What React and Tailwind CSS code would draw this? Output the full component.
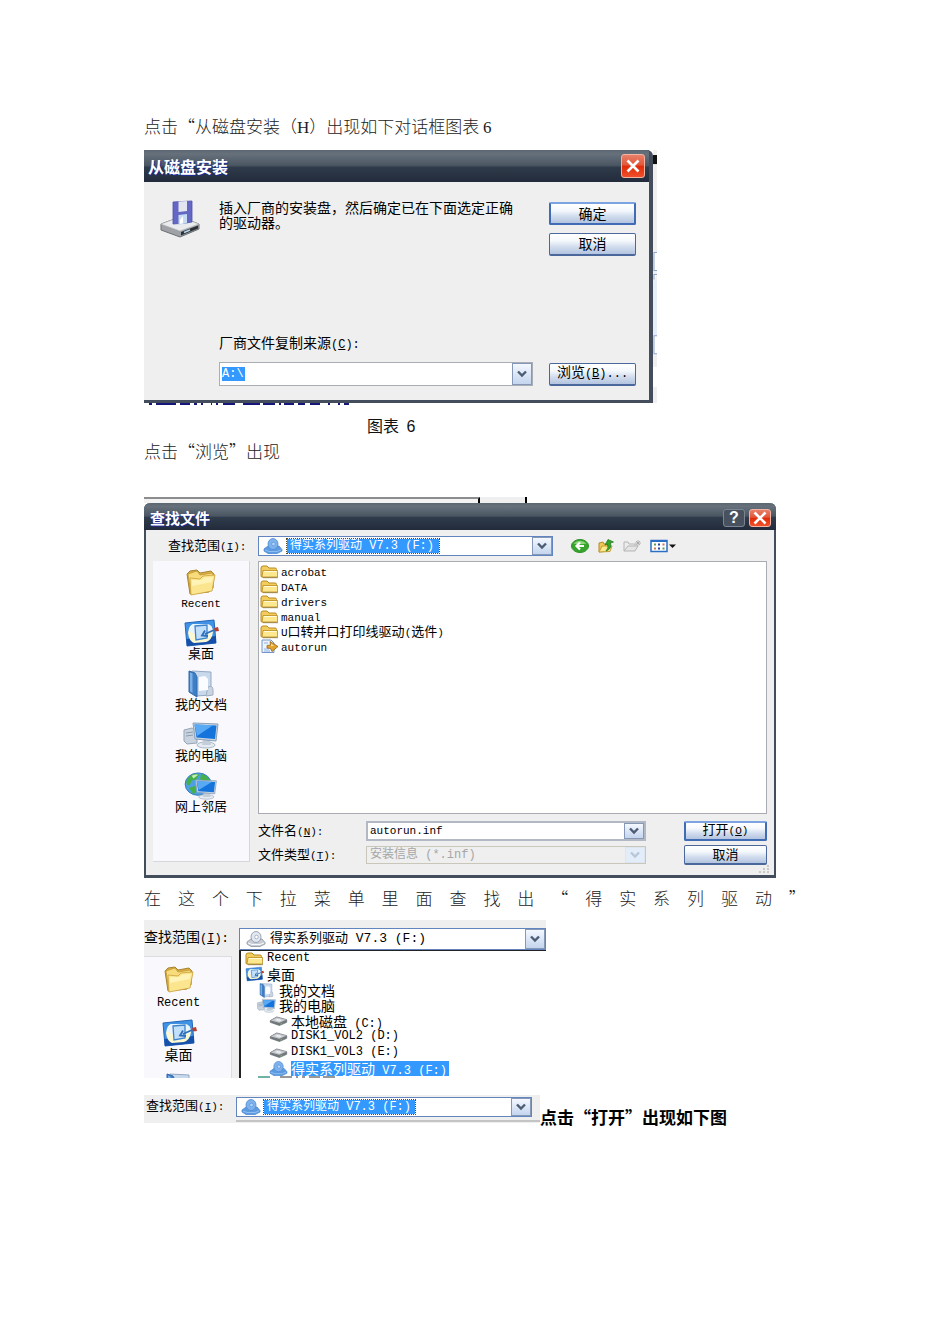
const CJK = "font-['Noto_Sans_CJK_SC',sans-serif]";
const MONO = "font-['Liberation_Mono','Noto_Sans_CJK_SC',monospace]";
const TITLE = 'bg-[linear-gradient(#5b6670_0%,#66717c_12%,#4a5662_48%,#2f3b4a_54%,#222b3b_100%)]';
const FACE = 'bg-[linear-gradient(#ffffff_0%,#f4f8fc_35%,#d3deee_62%,#b4c4e0_100%)]';

/* Latin runs are set smaller than the Chinese ones, as in a half-width bitmap face. */
function Mixed({ children, small = false }) {
  const size = small ? 'text-[11px]' : 'text-[12px]';
  return children.split(/([\x20-\x7e]+)/).filter(Boolean).map((part, i) =>
    /^[\x20-\x7e]/.test(part) ? (
      <span key={i} className={`${MONO} ${size} whitespace-pre`}>{part}</span>
    ) : (
      <span key={i}>{part}</span>
    ),
  );
}

function Key({ children, small = false }) {
  return (
    <span className={`${MONO} ${small ? 'text-[11px]' : 'text-[12px]'}`}>
      (<span className="underline">{children}</span>)
    </span>
  );
}

function Folder({ className }) {
  return (
    <svg viewBox="0 0 32 28" className={className} aria-hidden="true">
      <path d="M2 6 L5 3 L12 2 L15 5 L26 3 L29 6 L28 20 L24 24 L5 26 Z" fill="#d9ae43" stroke="#a98430" />
      <path d="M3 6 L12 3 L15 7 L28 5 L26 22 L6 26 Z" fill="#f8dc7c" stroke="#c39a3a" strokeWidth=".8" />
      <path d="M5 10 L15 11 L18 8 L30 7 L27 23 L6 27 Z" fill="#fbe68f" stroke="#cda23c" strokeWidth=".8" />
      <path d="M7 12 L16 12 L19 9.500 L28 9 L27 14 L7 18 Z" fill="#fff3b5" />
    </svg>
  );
}

function SmallFolder({ className }) {
  return (
    <svg viewBox="0 0 19 15" className={className} aria-hidden="true">
      <path d="M1 12.500 V4 Q1 2 3 2 H7 L9 4 H15 Q16.500 4 16.500 5.500 V13 H2 Z" fill="#f2cc5c" stroke="#b98b22" />
      <path d="M2 13 L3 6.500 H17.500 V13 Z" fill="#fde88f" stroke="#b98b22" strokeWidth=".8" />
      <path d="M4 7.500 H16.500" stroke="#fffbd8" />
      <path d="M3 13.700 H18" stroke="#8f7a3c" strokeWidth=".8" />
    </svg>
  );
}

function DesktopIcon({ className }) {
  return (
    <svg viewBox="0 0 36 28" className={className} aria-hidden="true">
      <path d="M2 4 L31 1 L33 24 L4 27 Z" fill="#3f92e6" stroke="#2366b8" />
      <path d="M3.500 20 L33 17 L33 24 L4 27 Z" fill="#1650a8" />
      <path d="M10 5 H24 Q30 6 30 13 Q29 21 23 23 L11 24 Q6 22 5 14 Q6 6 10 5 Z" fill="#fbf8d2" />
      <path d="M11 5 H24 Q30 6 29 12 L20 20 L6 12 Q7 6 11 5 Z" fill="#eaf4ff" />
      <path d="M12 7 L24 6 V19 L13 21 Z" fill="#c2e0fa" stroke="#3e84ca" strokeWidth="1.300" />
      <path d="M31 11 L22 15 M22 11.500 L19 16.500 L25 17" stroke="#2d6fbb" strokeWidth="1.800" fill="none" />
      <path d="M31 9 L35 8 L36 12 L32 12.500 Z" fill="#b8402f" />
    </svg>
  );
}

function DocsIcon({ className }) {
  return (
    <svg viewBox="0 0 26 28" className={className} aria-hidden="true">
      <path d="M4 1 L23 2 L23 25 L8 26 Z" fill="#c9d9ec" stroke="#93a8c2" />
      <path d="M20 17 Q25 15 25 20 V25 L18 26 Z" fill="#cbd5e1" stroke="#a0afc2" />
      <path d="M11 7 L17 6 L20 9 V20 L11 21 Z" fill="#fafcff" />
      <path d="M1 1 L7 3 L9 7 V27 L1 22 Z" fill="#3f7fc6" stroke="#2f69ac" />
      <path d="M2 2.500 L4.500 3.500 V23 L2 21 Z" fill="#7fb0e4" />
    </svg>
  );
}

function Monitor() {
  return (
    <>
      <ellipse cx="23" cy="24" rx="9" ry="3" fill="#e4ebf2" stroke="#aab7c5" />
      <path d="M20 19 H27 L28 24 H19 Z" fill="#c3ced9" />
      <path d="M10 2 L35 3 L33 20 L12 18 Z" fill="#c8d6e4" stroke="#8b9fb5" />
      <path d="M11.500 3.500 L33.500 4.500 L32 18 L13.500 16.500 Z" fill="#1573dc" />
      <path d="M11.500 3.500 L30 4.300 L14 15 Z" fill="#58aaf4" />
    </>
  );
}

function ComputerIcon({ className }) {
  return (
    <svg viewBox="0 0 36 28" className={className} aria-hidden="true">
      <path d="M1 9 L9 7 L14 10 V22 L4 23 L1 20 Z" fill="#c8d3df" stroke="#96a5b5" />
      <path d="M3 12 L10 11 M3 15 L10 14" stroke="#8c9bab" />
      <Monitor />
    </svg>
  );
}

function NetworkIcon({ className }) {
  return (
    <svg viewBox="0 0 36 30" className={className} aria-hidden="true">
      <ellipse cx="15" cy="13" rx="14" ry="12" fill="#4fa0e2" stroke="#2f78b8" />
      <path d="M5 6 Q10 0 16 3 L13 8 L8 9 L6 14 L3 14 Q1 10 5 6 Z M18 2 Q26 4 27 10 L21 11 L17 8 Z M5 17 L12 15 L13 21 L10 24 Z" fill="#45b04a" />
      <path d="M8 4 Q12 2 15 3 L10 7 Z" fill="#c6efb6" />
      <g transform="translate(3 7) scale(.9 .82)"><Monitor /></g>
    </svg>
  );
}

function DiscDrive({ className, tinted = false }) {
  const body = tinted ? '#5d9be0' : '#c9ced6';
  const edge = tinted ? '#4c8cd6' : '#8a929e';
  const disc = tinted ? '#7fb2ec' : '#dfe8f3';
  return (
    <svg viewBox="0 0 20 16" className={className} aria-hidden="true">
      <path d="M1 11 L5 8 H16 L19 11.500 V13 L14 15.500 H5 L1 13 Z" fill={body} stroke={edge} strokeWidth=".8" />
      <ellipse cx="10" cy="6" rx="5" ry="5.500" fill={disc} stroke={edge} strokeWidth=".8" />
      <ellipse cx="10.500" cy="6" rx="1.800" ry="1.800" fill={tinted ? '#b5d5f8' : '#ffffff'} stroke={edge} strokeWidth=".6" />
      <path d="M2 12 L6 13.500 H14 L18 12" stroke={tinted ? '#8fbdf0' : '#f8f9fb'} fill="none" />
    </svg>
  );
}

function HardDisk({ className }) {
  return (
    <svg viewBox="0 0 20 11" className={className} aria-hidden="true">
      <path d="M1 5 L8 1 L19 4 V7 L11 10.500 L1 7 Z" fill="#73787e" stroke="#5b6066" strokeWidth=".7" />
      <path d="M1.500 5 L8 1.500 L18.500 4 L11 7.500 Z" fill="#c6c9cd" />
      <path d="M6 4.500 L9 3 L14 4.500 L11 6 Z" fill="#eceded" />
      <path d="M12 9 L14 8" stroke="#72c463" />
    </svg>
  );
}

function SetupFile({ className }) {
  return (
    <svg viewBox="0 0 19 15" className={className} aria-hidden="true">
      <path d="M2 1 H11 L14 4 V13.500 H2 Z" fill="#edf4fd" stroke="#7394c6" />
      <path d="M4 4 H8 M4 10 H9 M4 12 H10" stroke="#8fb2e4" />
      <path d="M10 2.500 L12.500 4 L18 7.500 L12 12.500 L10.500 9.500 L7 9 L7 6.500 L10.500 6 Z" fill="#e0a32f" stroke="#94661b" strokeWidth=".8" />
      <path d="M11 5 L14 6.500 L11 7.500 Z" fill="#fbe29a" />
    </svg>
  );
}

function FloppyDrive({ className }) {
  return (
    <svg viewBox="0 0 40 38" className={className} aria-hidden="true">
      <path d="M1 24 L20 17 L39 24 V29 L20 37 L1 30 Z" fill="#9ea2a6" stroke="#6c7075" />
      <path d="M1 24 L20 17 L39 24 L20 31 Z" fill="#e9ebec" stroke="#b4b7ba" strokeWidth=".6" />
      <path d="M21 32 L38 25.500 V28.500 L21 35.500 Z" fill="#2c3036" />
      <path d="M24 32.500 L30 30" stroke="#b8d8ee" strokeWidth="1.500" />
      <path d="M13 2 L32 1 V22 L26 23 L13 24 Z" fill="#6468c4" stroke="#4d51ae" strokeWidth=".8" />
      <path d="M18.500 1.500 L27 1 V11 L18.500 12 Z" fill="#e3e6ee" />
      <path d="M18.500 15 L27 14 V23 L18.500 25 Z" fill="#c5dcf2" />
      <path d="M20 20 L23 16 V23 L20 24 Z" fill="#fff" />
    </svg>
  );
}

function Chevron({ faded = false }) {
  return (
    <svg viewBox="0 0 12 8" className="h-2 w-3" aria-hidden="true">
      <path d="M2 1.500 L6 5.500 L10 1.500" fill="none" stroke={faded ? '#b9c6d8' : '#4c5c74'} strokeWidth="2.400" />
    </svg>
  );
}

function Drop({ label, faded = false }) {
  const look = faded
    ? 'border-[#dce6f2] bg-[#e3edf9]'
    : 'border-[#8598b5] bg-[linear-gradient(#f4f8ff,#c4d5ee)]';
  return (
    <button type="button" aria-label={label} disabled={faded} className={`flex w-5 shrink-0 items-center justify-center self-stretch border ${look}`}>
      <Chevron faded={faded} />
    </button>
  );
}

function WinButton({ children, primary = false, className = 'h-[23px]' }) {
  const edge = primary
    ? 'border-2 border-[#3f6cb5] border-t-[#7da4e2]'
    : 'border border-[#4a689c] border-b-2';
  return (
    <button type="button" className={`flex w-full items-center justify-center rounded-[2px] pb-[2px] text-black ${edge} ${FACE} ${className}`}>
      {children}
    </button>
  );
}

function CloseButton() {
  return (
    <button type="button" aria-label="关闭" className="flex h-full w-full items-center justify-center rounded-[3px] border border-[#f3b3a3] bg-[linear-gradient(#e8806a_0%,#e2573a_45%,#e02c08_52%,#f0502a_100%)]">
      <svg viewBox="0 0 14 14" className="h-[14px] w-[14px]" aria-hidden="true">
        <path d="M1.500 1.500 L12.500 12.500 M12.500 1.500 L1.500 12.500" stroke="#fff" strokeWidth="2.600" />
      </svg>
    </button>
  );
}

function InstallDialog() {
  return (
    <section className="w-full max-w-[513px]">
      <div className="flex">
        <div className={`min-w-0 flex-1 rounded-tr-md border-r-4 border-b-[3px] border-[#444d5c] bg-[#efefef] ${CJK}`}>
          <header className={`flex h-8 items-center justify-between pr-1 pl-1 ${TITLE}`}>
            <h2 className="text-[16px] leading-4 font-bold text-white [text-shadow:1px_1px_0_#1c2d9a]">从磁盘安装</h2>
            <span className="h-6 w-6"><CloseButton /></span>
          </header>
          <div className="flex h-[218px] flex-col justify-between pt-[18px] pr-[13px] pb-[14px]">
            <div className="flex">
              <div className="w-[75px] shrink-0 pl-4"><FloppyDrive className="h-[38px] w-10" /></div>
              <p className="min-w-0 flex-1 pr-3 text-[14px] leading-[15px] text-black">
                插入厂商的安装盘，然后确定已在下面选定正确的驱动器。
              </p>
              <div className="ml-4 flex w-[87px] shrink-0 flex-col gap-2 pt-[2px] text-[14px] leading-4">
                <WinButton primary>确定</WinButton>
                <WinButton>取消</WinButton>
              </div>
            </div>
            <div className="pl-[75px]">
              <label htmlFor="source" className="block text-[14px] leading-4 text-black">
                厂商文件复制来源<Key>C</Key><span className={`${MONO} text-[12px]`}>:</span>
              </label>
              <div className="mt-[9px] flex items-center gap-4">
                <div className="flex h-6 min-w-0 flex-1 items-center border border-[#a9adb5] bg-white pl-[2px]">
                  <input id="source" defaultValue="A:\" className={`h-[14px] w-[23px] bg-[#3399ff] text-[12px] text-white ${MONO}`} />
                  <span className="flex-1" />
                  <Drop label="展开来源" />
                </div>
                <div className="w-[87px] shrink-0 text-[14px] leading-4">
                  <WinButton><span>浏览<Key>B</Key><span className={`${MONO} text-[12px]`}>...</span></span></WinButton>
                </div>
              </div>
            </div>
          </div>
        </div>
        <svg viewBox="0 0 4 252" preserveAspectRatio="none" className="w-1 shrink-0" aria-hidden="true">
          <rect width="4" height="252" fill="#f1efef" />
          <rect y="5" width="4" height="9" fill="#111" />
          <rect y="130" width="4" height="55" fill="#e4eefb" />
          <path d="M4 102 H1 V120 H4 M4 124 H1 V129 M4 185 H1 V203 H4" fill="#fff" stroke="#8ca5d0" />
          <rect y="216" width="4" height="20" fill="#fff" />
        </svg>
      </div>
      <svg viewBox="0 0 513 2" className="h-[2px] w-full" aria-hidden="true">
        <path d="M5 1 H8 M12 1 H32 M36 1 H46 M50 1 H53 M57 1 H59 M67 1 H68 M72 1 H74 M79 1 H91 M99 1 H116 M119 1 H131 M135 1 H137 M140 1 H150 M154 1 H161 M166 1 H176 M184 1 H186 M194 1 H196 M200 1 H205" stroke="#15157a" strokeWidth="2" />
      </svg>
    </section>
  );
}

function DriveSelect({ id, children, icon, selected = false, className, size, selectWidth }) {
  const tone = selected ? 'bg-[#3399ff] text-white outline-1 outline-dotted outline-[#5a4a20]' : 'bg-white text-black';
  return (
    <div className={`flex min-w-0 items-center border border-[#6285c0] bg-white ${className}`}>
      {icon}
      <select id={id} className={`appearance-none ${MONO} ${size} ${tone} ${selectWidth}`}>
        <option>{children}</option>
      </select>
      <span className="flex-1" />
      <Drop label="展开查找范围" />
    </div>
  );
}

const places = [
  { name: 'Recent', icon: <Folder className="h-7 w-8" /> },
  { name: '桌面', icon: <DesktopIcon className="h-7 w-9" /> },
  { name: '我的文档', icon: <DocsIcon className="h-7 w-[26px]" /> },
  { name: '我的电脑', icon: <ComputerIcon className="h-7 w-9" /> },
  { name: '网上邻居', icon: <NetworkIcon className="h-7 w-9" /> },
];

const files = ['acrobat', 'DATA', 'drivers', 'manual', 'U口转并口打印线驱动(选件)', 'autorun'];

function Toolbar() {
  return (
    <div className="ml-[18px] flex items-center gap-[9px]">
      <button type="button" aria-label="后退">
        <svg viewBox="0 0 18 16" className="h-4 w-[18px]" aria-hidden="true">
          <ellipse cx="9" cy="8" rx="8.500" ry="6.500" fill="#37a52d" stroke="#2b8f24" />
          <path d="M2.500 5.500 Q9 0 15.500 5.500 Q9 7 2.500 5.500" fill="#8fd67d" />
          <path d="M13 8 H6 M9 4.500 L5.500 8 L9 11.500" stroke="#fff" strokeWidth="2.200" fill="none" />
        </svg>
      </button>
      <button type="button" aria-label="向上一级">
        <svg viewBox="0 0 16 16" className="h-4 w-4" aria-hidden="true">
          <path d="M1 14 V5 L5 4 L6 6 H11 V13 Z" fill="#efc955" stroke="#b38c28" />
          <path d="M1 14 L4 8 H14 L12 13.500 Z" fill="#fce88d" stroke="#c39c36" />
          <path d="M8 13 Q11 10 9.500 6 L7 7 L10 1.500 L15.500 4 L12.500 5 Q14 11 8 13 Z" fill="#35a52c" stroke="#1c7517" strokeWidth=".7" />
        </svg>
      </button>
      <button type="button" aria-label="新建文件夹">
        <svg viewBox="0 0 18 16" className="h-4 w-[18px]" aria-hidden="true">
          <path d="M1 13 V4 H5 L6 6 H12 V8" fill="#ececec" stroke="#b5b5b5" />
          <path d="M1 13 L5 8 H15 L12 13 Z" fill="#e5e5e5" stroke="#b5b5b5" />
          <path d="M15 2 V8 M12 5 H18 M13 3 L17 7 M17 3 L13 7" stroke="#a5a5a5" strokeWidth=".8" />
        </svg>
      </button>
      <button type="button" aria-label="查看菜单">
        <svg viewBox="0 0 26 16" className="h-4 w-[26px]" aria-hidden="true">
          <rect x="1" y="2.500" width="16" height="11" fill="#fff" stroke="#2b6fc4" strokeWidth="1.500" />
          <path d="M1 3 H17" stroke="#2b6fc4" strokeWidth="2" />
          <path d="M4 6.500 H6 M12.500 10.500 H14.500" stroke="#5a9b55" strokeWidth="2" />
          <path d="M8 6.500 H10 M8 10.500 H10" stroke="#2745a0" strokeWidth="2" />
          <path d="M12.500 6.500 H14.500 M4 10.500 H6" stroke="#c77a55" strokeWidth="2" />
          <path d="M19 6.500 H26 L22.500 10 Z" fill="#111" />
        </svg>
      </button>
    </div>
  );
}

function FindDialog() {
  return (
    <section className={`w-full max-w-[632px] text-[13px] leading-4 text-black ${CJK}`}>
      <div className="flex h-[6px]" aria-hidden="true">
        <span className="w-[336px] border-t-2 border-r-2 border-t-[#8d8d8d] border-r-black bg-[#f3f3f3]" />
        <span className="w-[47px] border-r-2 border-black bg-[#efefef]" />
      </div>
      <div className="rounded-t-md border-x-2 border-b-[3px] border-[#444d5c] bg-[#efefef]">
        <header className={`-mx-[2px] flex h-[27px] items-center rounded-t-md pt-[2px] pr-[5px] pl-[6px] ${TITLE}`}>
          <h2 className="flex-1 text-[15px] leading-4 font-bold text-white [text-shadow:1px_1px_0_#1c2d9a]">查找文件</h2>
          <button type="button" aria-label="帮助" className="mr-1 h-[18px] w-[22px] rounded-[3px] border border-[#7b8592] bg-[#48525f] text-center font-['Liberation_Sans',sans-serif] text-[16px] leading-4 font-bold text-white">?</button>
          <span className="h-[18px] w-[22px]"><CloseButton /></span>
        </header>
        <div className="flex h-[31px] items-center pl-[22px]">
          <label htmlFor="look-in" className="w-[90px] shrink-0 whitespace-nowrap">查找范围<Key small>I</Key><Mixed small>:</Mixed></label>
          <DriveSelect id="look-in" selected className="h-5 w-[295px]" size="h-[14px] text-[12px] leading-[14px]" selectWidth="ml-1 w-[152px] pl-[3px]" icon={<DiscDrive tinted className="ml-1 h-4 w-5 shrink-0" />}>得实系列驱动 V7.3 (F:)</DriveSelect>
          <Toolbar />
        </div>
        <div className="flex pr-[7px] pl-[7px]">
          <nav className="flex h-[301px] w-[97px] shrink-0 flex-col border-r border-b border-[#d6d6dc] bg-[#f8f8fd] pt-[7px]">
            {places.map((p) => (
              <a key={p.name} href="#places" className="flex h-[51px] flex-col items-center">
                {p.icon}
                <span className="h-3 leading-3"><Mixed small>{p.name}</Mixed></span>
              </a>
            ))}
          </nav>
          <div className="ml-2 min-w-0 flex-1">
            <ul className="h-[253px] border border-[#a9adb3] bg-white pt-[2px] pl-[1px]">
              {files.map((f) => (
                <li key={f} className="flex h-[15px] items-center gap-[2px] leading-[15px]">
                  {f === 'autorun' ? <SetupFile className="h-[15px] w-[19px]" /> : <SmallFolder className="h-[15px] w-[19px]" />}
                  <span><Mixed small>{f}</Mixed></span>
                </li>
              ))}
            </ul>
            <div className="mt-[7px] grid grid-cols-[108px_minmax(0,1fr)_83px] items-center gap-y-1">
              <label htmlFor="file-name" className="whitespace-nowrap">文件名<Key small>N</Key><Mixed small>:</Mixed></label>
              <div className="mr-[38px] flex h-5 items-center border-2 border-[#b3b9c4] bg-white">
                <input id="file-name" defaultValue="autorun.inf" className={`h-4 min-w-0 flex-1 pl-[2px] text-[11px] ${MONO}`} />
                <Drop label="展开文件名" />
              </div>
              <WinButton primary className="h-5"><span>打开<Key small>O</Key></span></WinButton>
              <label htmlFor="file-type" className="whitespace-nowrap">文件类型<Key small>T</Key><Mixed small>:</Mixed></label>
              <div className="mr-[38px] flex h-[18px] items-center border border-[#c9c7ba] bg-[#efefef]">
                <select id="file-type" disabled className={`h-4 min-w-0 flex-1 appearance-none pl-[3px] text-[12px] leading-4 text-[#a6a6a6] opacity-100 ${MONO}`}>
                  <option>安装信息 (*.inf)</option>
                </select>
                <Drop label="展开文件类型" faded />
              </div>
              <WinButton className="h-5">取消</WinButton>
            </div>
          </div>
        </div>
        <div className="flex h-[10px] justify-end pr-1" aria-hidden="true">
          <svg viewBox="0 0 12 10" className="h-[10px] w-3">
            <path d="M9 1 H11 M5 4 H7 M9 4 H11 M1 7 H3 M5 7 H7 M9 7 H11" stroke="#c9c9c9" strokeWidth="2" />
          </svg>
        </div>
      </div>
    </section>
  );
}

const tree = [
  { name: 'Recent', pad: 'pl-1', icon: <SmallFolder className="h-[15px] w-[19px]" /> },
  { name: '桌面', pad: 'pl-1', icon: <DesktopIcon className="h-4 w-[19px]" /> },
  { name: '我的文档', pad: 'pl-4', icon: <DocsIcon className="h-[15px] w-[19px]" /> },
  { name: '我的电脑', pad: 'pl-4', icon: <ComputerIcon className="h-[15px] w-[19px]" /> },
  { name: '本地磁盘 (C:)', pad: 'pl-7', icon: <HardDisk className="h-[10px] w-[19px]" /> },
  { name: 'DISK1_VOL2 (D:)', pad: 'pl-7', icon: <HardDisk className="h-[10px] w-[19px]" /> },
  { name: 'DISK1_VOL3 (E:)', pad: 'pl-7', icon: <HardDisk className="h-[10px] w-[19px]" /> },
  { name: '得实系列驱动 V7.3 (F:)', pad: 'pl-7', selected: true, icon: <DiscDrive tinted className="h-[15px] w-[19px]" /> },
];

function DriveList() {
  return (
    <section className={`flex h-[158px] w-full max-w-[402px] overflow-hidden bg-[#efefef] text-[14px] leading-4 text-black ${CJK}`}>
      <div className="w-[95px] shrink-0">
        <label htmlFor="drive" className="block h-9 pt-2 whitespace-nowrap">查找范围<Key>I</Key><Mixed>:</Mixed></label>
        <nav className="flex h-[122px] w-[88px] flex-col overflow-hidden border-t border-r border-[#dcdce2] bg-[#f8f8fd] pt-2 pr-[18px]">
          {places.slice(0, 2).map((p) => (
            <a key={p.name} href="#places" className="flex h-[54px] shrink-0 flex-col items-center">
              {p.icon}
              <span className="leading-[14px]"><Mixed>{p.name}</Mixed></span>
            </a>
          ))}
          <a href="#places" aria-label="我的文档" className="flex shrink-0 justify-center"><DocsIcon className="h-7 w-[26px]" /></a>
        </nav>
      </div>
      <div className="flex min-w-0 flex-1 flex-col pt-2">
        <DriveSelect id="drive" className="h-[22px] shrink-0" size="h-4 text-[13px] leading-4" selectWidth="ml-1 w-[162px]" icon={<DiscDrive className="ml-[6px] h-4 w-5 shrink-0" />}>得实系列驱动 V7.3 (F:)</DriveSelect>
        <div className="flex-1 border-t border-l-2 border-[#222] bg-white">
          <ul className="grid h-[125px] grid-rows-8">
            {tree.map((t) => (
              <li key={t.name} className={`flex items-center gap-[3px] ${t.pad}`}>
                {t.icon}
                <span className={`flex h-[15px] items-baseline leading-[15px] whitespace-nowrap ${t.selected ? 'bg-[#3399ff] pr-[2px] text-white' : ''}`}><Mixed>{t.name}</Mixed></span>
              </li>
            ))}
          </ul>
          <svg viewBox="0 0 100 2" className="h-[2px] w-[100px]" aria-hidden="true">
            <path d="M17 1 H29" stroke="#6fb2a6" strokeWidth="2" />
            <path d="M39 1 H51 M55 1 H57 M61 1 H64 M68 1 H79 M82 1 H94" stroke="#333" />
          </svg>
        </div>
      </div>
    </section>
  );
}

function SelectedDrive() {
  return (
    <section className={`flex h-7 w-full max-w-[396px] bg-[#efefef] pt-[2px] pl-[2px] text-[13px] leading-4 text-black ${CJK}`}>
      <label htmlFor="chosen" className="w-[90px] shrink-0 whitespace-nowrap">查找范围<Key small>I</Key><Mixed small>:</Mixed></label>
      <div className="flex min-w-0 flex-1 flex-col justify-between">
        <DriveSelect id="chosen" selected className="mr-2 h-5" size="h-[14px] text-[12px] leading-[14px]" selectWidth="ml-[3px] w-[151px] pl-[3px]" icon={<DiscDrive tinted className="ml-1 h-4 w-5 shrink-0" />}>得实系列驱动 V7.3 (F:)</DriveSelect>
        <span className="mb-[1px] h-[2px] bg-[#c4c4c4]" />
      </div>
    </section>
  );
}

const BODY = 'text-[17px] leading-5 text-[#222]';

export default function App() {
  return (
    <main lang="zh-CN" className={`min-h-screen bg-white px-[144px] pt-[116px] pb-[200px] ${CJK}`}>
      <p className={`${BODY} font-light`}>
        点击“从磁盘安装（<span className="font-['Liberation_Serif',serif] font-normal">H</span>）出现如下对话框图表 <span className="font-['Liberation_Serif',serif] font-normal">6</span>
      </p>
      <div className="mt-3"><InstallDialog /></div>
      <p className="mt-[10px] pl-[223px] text-[16px] leading-5 text-[#111]">
        图表 <span className="ml-1 font-['Liberation_Sans',sans-serif]">6</span>
      </p>
      <p className={`mt-1 ${BODY} font-light`}>点击“浏览”出现</p>
      <div className="mt-9"><FindDialog /></div>
      <p className={`mt-[10px] flex justify-between ${BODY} font-light`}>
        {[...'在这个下拉菜单里面查找出“得实系列驱动”'].map((c, i) => <span key={i}>{c}</span>)}
      </p>
      <div className="mt-3"><DriveList /></div>
      <div className="mt-[17px] flex items-end">
        <SelectedDrive />
        <p className="-mb-1 shrink-0 text-[17px] leading-5 font-bold text-black">点击“打开”出现如下图</p>
      </div>
    </main>
  );
}
